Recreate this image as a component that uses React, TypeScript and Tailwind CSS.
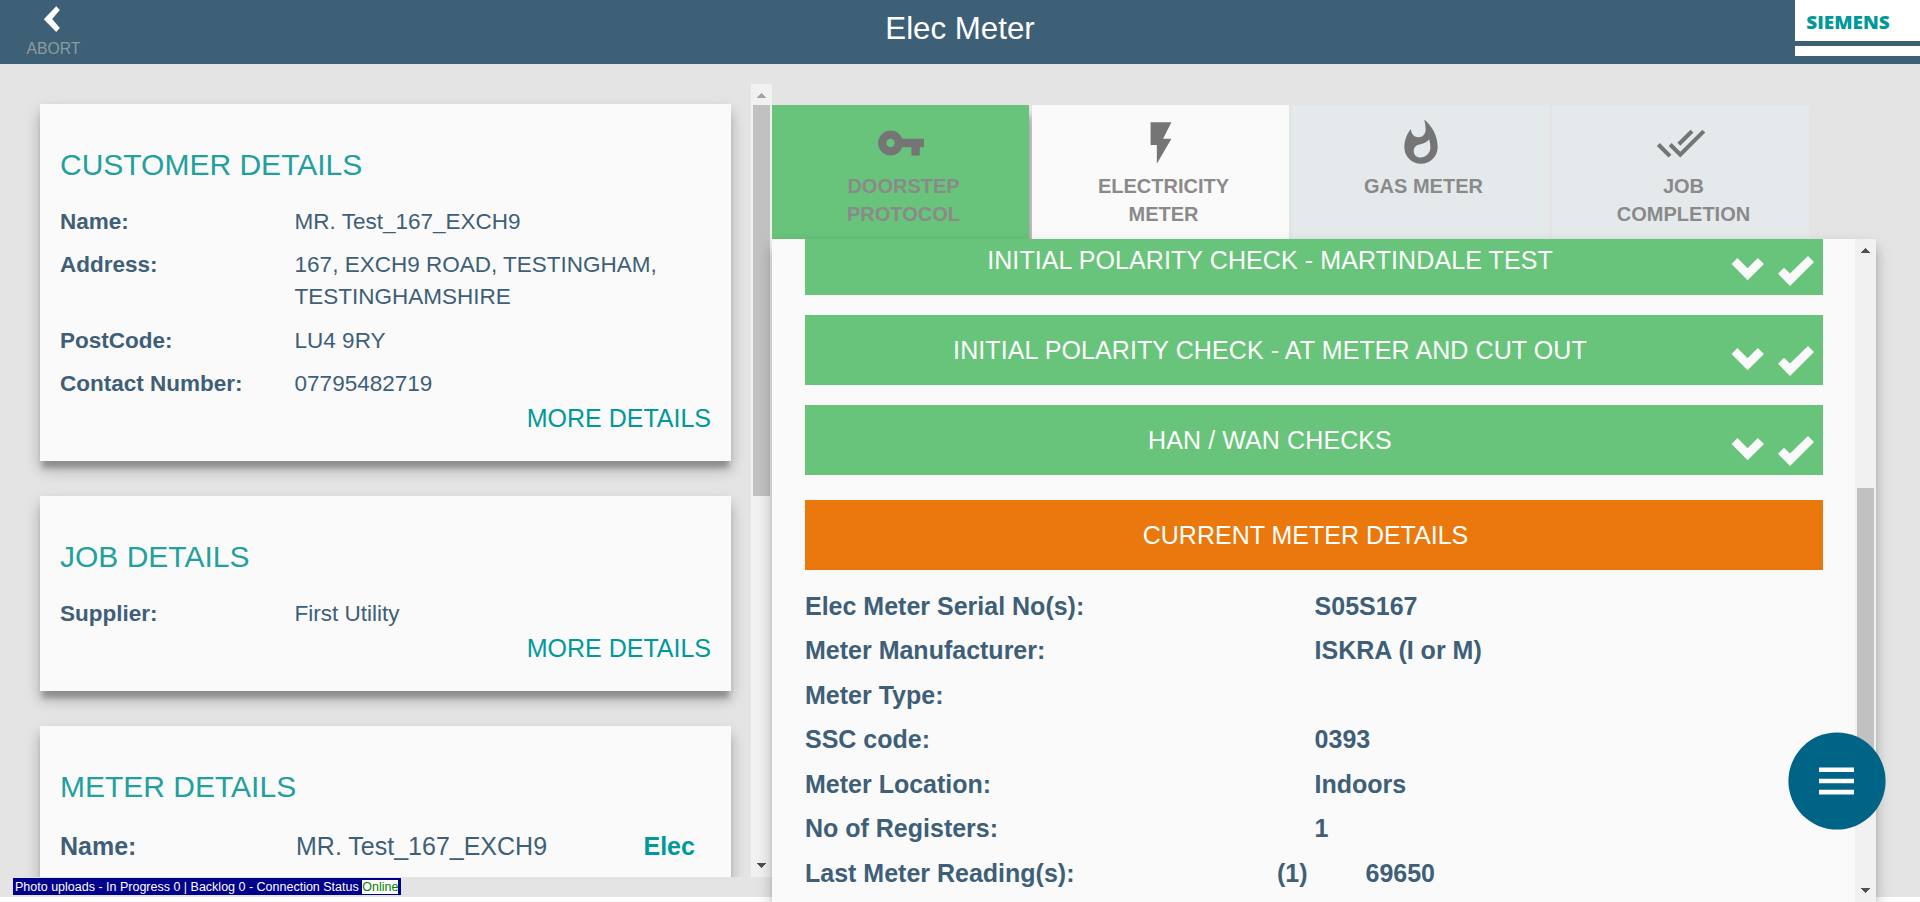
import type { ReactNode } from "react";
import { MdVpnKey, MdFlashOn, MdWhatshot, MdDoneAll } from "react-icons/md";

const cardShadow =
  "shadow-[0_9px_5px_-2px_rgba(0,0,0,0.22),0_9px_12px_0_rgba(0,0,0,0.14),0_7px_17px_0_rgba(0,0,0,0.12)]";

function Arrow({ down = false, className }: { down?: boolean; className: string }) {
  return (
    <svg width="9" height="5" viewBox="0 0 9 5" shapeRendering="crispEdges" className={className}>
      <path d={down ? "M0 0h9v1H8v1H7v1H6v1H5v1H4V4H3V3H2V2H1V1H0z" : "M0 5h9V4H8V3H7V2H6V1H5V0H4v1H3v1H2v1H1v1H0z"} fill="currentColor" />
    </svg>
  );
}

function Card({ title, children, className = "" }: { title: string; children: ReactNode; className?: string }) {
  return (
    <section className={`bg-[#fafafa] px-5 pt-11 pb-[25px] ${cardShadow} ${className}`}>
      <h2 className="mb-[25.4px] text-[30px] leading-[33px] text-[#22a09e]">{title}</h2>
      {children}
    </section>
  );
}

function Row({ label, value }: { label: string; value: string }) {
  return (
    <div className="flex text-[22.5px] leading-8">
      <dt className="w-[234.6px] shrink-0 font-bold">{label}</dt>
      <dd>{value}</dd>
    </div>
  );
}

function More() {
  return <div className="text-right text-[25px] leading-9 text-[#009999]">MORE DETAILS</div>;
}

function Tab({ icon, label, className }: { icon: ReactNode; label: ReactNode; className: string }) {
  return (
    <div className={`flex h-[134px] w-[257px] flex-col items-center pt-[13px] ${className}`}>
      {icon}
      <div className="pt-[4px] pl-[6px] text-center text-[20px] leading-7 font-bold text-[#8a8a8a]">{label}</div>
    </div>
  );
}

function Bar({ children }: { children: ReactNode }) {
  return (
    <div className="relative flex h-[70px] items-center justify-center bg-[#68c47a] pr-[88px] text-[25px] leading-9 tracking-[0.1px] text-white">
      {children}
      <svg width="84" height="31" viewBox="0 0 84 31" className="absolute top-[31px] right-[8px]" fill="#fafafa">
        <path d="M.6 8 6.4 2l10.2 10.3L26.8 2 33 8 16.6 24.2z" />
        <path d="M47 17.7l6-6 6 5.7L77 0l6 6-24 24z" />
      </svg>
    </div>
  );
}

const details = [
  ["Elec Meter Serial No(s):", "S05S167"],
  ["Meter Manufacturer:", "ISKRA (I or M)"],
  ["Meter Type:", ""],
  ["SSC code:", "0393"],
  ["Meter Location:", "Indoors"],
  ["No of Registers:", "1"],
];

export default function App() {
  return (
    <div className="relative h-[902px] w-[1920px] overflow-hidden bg-white font-['Liberation_Sans',Arial,sans-serif] text-[#3e5f77]">
      <header className="flex h-16 justify-between bg-[#3e6076]">
        <div className="flex w-[125px] flex-col pl-[26.5px]">
          <svg width="17" height="26" viewBox="0 0 17 26" className="mt-[6px] ml-[17.5px]">
            <path d="M12.2.4 15.6 4 8 13l7.6 9-3.4 3.7L0 13.3z" fill="#fff" stroke="#fff" strokeWidth=".4" />
          </svg>
          <span className="mt-[7.5px] text-[15.7px] leading-[18px] text-[#8e9a9c]">ABORT</span>
        </div>
        <h1 className="pt-[11px] text-[31.25px] leading-9 text-white">Elec Meter</h1>
        <div className="flex h-14 w-[125px] flex-col bg-white">
          <svg width="125" height="41" viewBox="0 0 125 41">
            <text x="11.3" y="28.6" fontSize="17.6" fontWeight="800" textLength="83.5" lengthAdjust="spacingAndGlyphs" fill="#009999" className="font-['Open_Sans','Noto_Sans',sans-serif]">SIEMENS</text>
          </svg>
          <div className="h-[5px] bg-[#3e6076]" />
        </div>
      </header>

      <main className="flex h-[833px] bg-[#e4e4e4]">
        <div className="mt-5 flex h-[793px] w-[772px] shrink-0 overflow-hidden">
          <div className="flex flex-1 flex-col gap-[35px] pt-5 pr-5 pl-10">
            <Card title="CUSTOMER DETAILS" className="h-[357px] shrink-0">
              <dl className="flex flex-col gap-[11.1px]">
                <Row label="Name:" value="MR. Test_167_EXCH9" />
                <Row label="Address:" value="167, EXCH9 ROAD, TESTINGHAM, TESTINGHAMSHIRE" />
                <Row label="PostCode:" value="LU4 9RY" />
                <Row label="Contact Number:" value="07795482719" />
              </dl>
              <More />
            </Card>
            <Card title="JOB DETAILS" className="h-[195px] shrink-0">
              <dl>
                <Row label="Supplier:" value="First Utility" />
              </dl>
              <More />
            </Card>
            <Card title="METER DETAILS" className="h-[300px] shrink-0">
              <div className="flex text-[25px] leading-9">
                <span className="w-[236px] font-bold">Name:</span>
                <span className="w-[347.5px]">MR. Test_167_EXCH9</span>
                <span className="font-bold text-[#009999]">Elec</span>
              </div>
            </Card>
          </div>
          <div className="flex w-[21px] flex-col items-center bg-[#f1f1f1]">
            <Arrow className="mt-[9px] text-[#a3a3a3]" />
            <div className="mt-[7px] h-[391px] w-[17px] bg-[#c1c1c1]" />
            <Arrow down className="mt-auto mb-[9px] text-[#505050]" />
          </div>
        </div>

        <div className="w-[1104px] shrink-0 pt-[41px]">
          <div className="flex gap-[3px]">
            <Tab
              className="bg-[#68c47a] shadow-[5px_9px_6px_-2px_rgba(0,0,0,0.2),4px_10px_10px_-4px_rgba(0,0,0,0.2)]"
              icon={<MdVpnKey size={50} color="#757575" />}
              label={<>DOORSTEP<br />PROTOCOL</>}
            />
            <Tab
              className="relative bg-[#fafafa]"
              icon={<MdFlashOn size={50} color="#757575" />}
              label={<>ELECTRICITY<br />METER</>}
            />
            <Tab
              className="relative bg-[#e4eaec]"
              icon={<MdWhatshot size={50} color="#757575" />}
              label="GAS METER"
            />
            <Tab
              className="relative bg-[#e4eaec]"
              icon={<MdDoneAll size={50} color="#757575" />}
              label={<>JOB<br />COMPLETION</>}
            />
          </div>
          <div className={`relative flex h-[663px] bg-[#fafafa] ${cardShadow}`}>
            <div className="h-full flex-1 overflow-hidden pr-8 pl-[33px]">
              <div className="-mt-[14px] flex flex-col gap-5">
                <Bar>INITIAL POLARITY CHECK - MARTINDALE TEST</Bar>
                <Bar>INITIAL POLARITY CHECK - AT METER AND CUT OUT</Bar>
                <Bar>HAN / WAN CHECKS</Bar>
              </div>
              <div className="mt-[25px] flex h-[70px] items-center justify-center bg-[#ea780c] pr-[17px] text-[25px] leading-9 text-white">
                CURRENT METER DETAILS
              </div>
              <dl className="mt-[17.6px] flex flex-col gap-[8.5px] text-[25px] leading-9 font-bold">
                {details.map(([label, value]) => (
                  <div key={label} className="flex">
                    <dt className="w-[509.6px]">{label}</dt>
                    <dd>{value}</dd>
                  </div>
                ))}
                <div className="flex">
                  <dt className="w-[472px]">Last Meter Reading(s):</dt>
                  <dd className="w-[88.5px]">(1)</dd>
                  <dd>69650</dd>
                </div>
              </dl>
            </div>
            <div className="flex w-[21px] flex-col items-center bg-[#f1f1f1] text-[#505050]">
              <Arrow className="mt-[9px]" />
              <div className="mt-[235px] h-[300px] w-[17px] bg-[#c1c1c1]" />
              <Arrow down className="mt-auto mb-[9px]" />
            </div>
          </div>
        </div>
      </main>

      <div className="absolute top-[878px] left-[13px] flex h-[17px] w-[388px] items-center bg-[#00008b] pl-[2px] text-[12.5px] leading-[14px] whitespace-pre text-white">
        <span>Photo uploads - In Progress 0 | Backlog 0 - Connection Status </span>
        <span className="bg-white text-[#008000]">Online</span>
      </div>

      <button className="absolute top-[732px] left-[1788px] flex size-[98px] items-center justify-center">
        <svg width="98" height="98" viewBox="0 0 98 98">
          <circle cx="49" cy="49" r="48.6" fill="#006487" />
          <path d="M31 35.5h35v4.6H31zM31 46.7h35v4.6H31zM31 57.8h35v4.6H31z" fill="#fff" />
        </svg>
      </button>
    </div>
  );
}
